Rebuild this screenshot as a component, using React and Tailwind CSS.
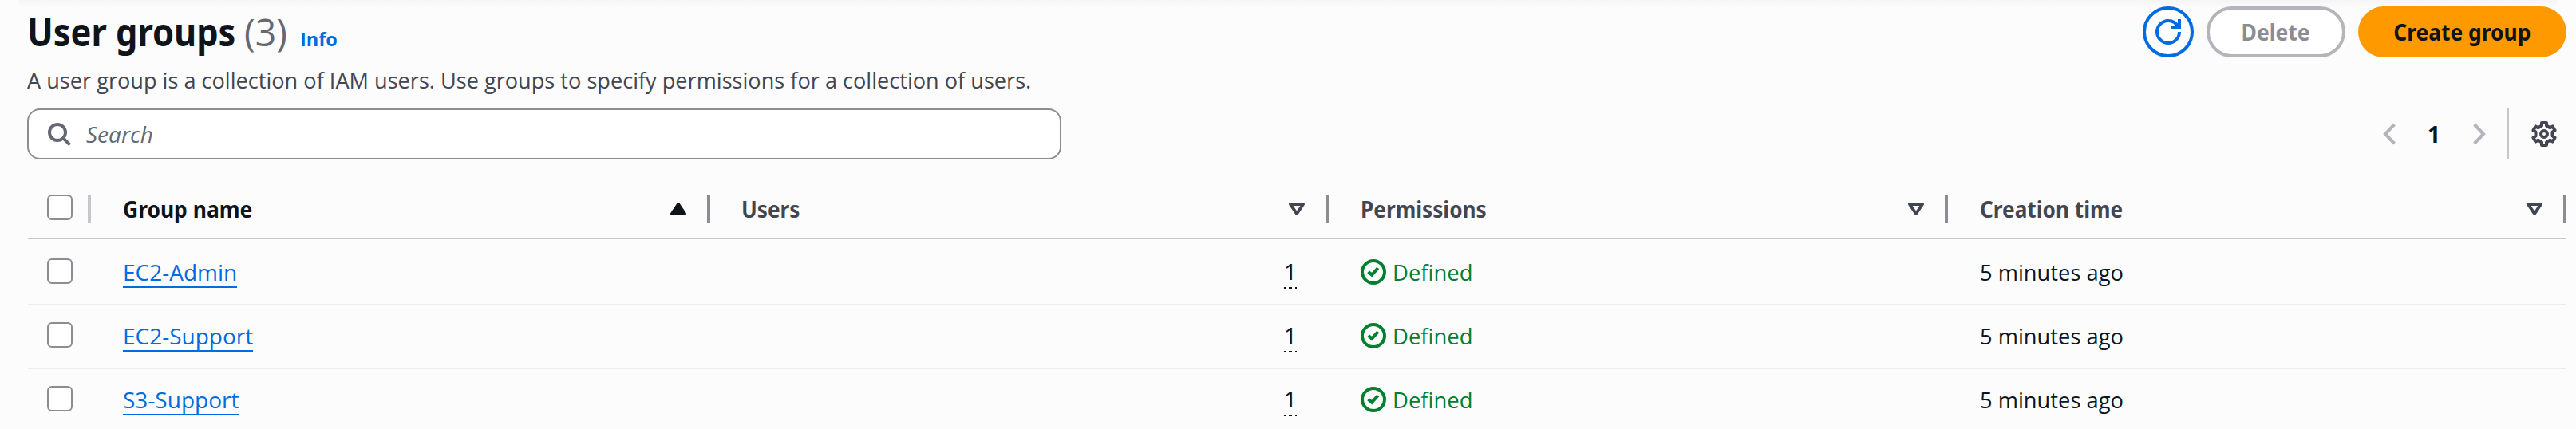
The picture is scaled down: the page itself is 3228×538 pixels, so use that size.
import React from "react";

const GRID = "grid grid-cols-[80px_776px_775px_776px_775px]";

const columns = [
  { label: "Group name", sorted: true, pad: "pl-10" },
  { label: "Users", pad: "pl-[39px]" },
  { label: "Permissions", pad: "pl-10" },
  { label: "Creation time", pad: "pl-10" },
];

const groups = [
  { name: "EC2-Admin", users: 1, permissions: "Defined", created: "5 minutes ago" },
  { name: "EC2-Support", users: 1, permissions: "Defined", created: "5 minutes ago" },
  { name: "S3-Support", users: 1, permissions: "Defined", created: "5 minutes ago" },
];

function Icon({ className = "", children }) {
  return (
    <svg
      viewBox="0 0 16 16"
      className={"size-8 shrink-0 overflow-visible " + className}
      fill="none"
      stroke="currentColor"
      strokeWidth="2"
    >
      {children}
    </svg>
  );
}

function Checkbox() {
  return <span className="block size-8 rounded-[6px] border-2 border-[#8c8c94] bg-white" />;
}

function SortIcon({ sorted }) {
  return sorted ? (
    <Icon className="text-[#0f141a]">
      <path d="M4 11h8L8 5z" fill="currentColor" strokeLinejoin="round" />
    </Icon>
  ) : (
    <Icon className="text-[#424650]">
      <path d="M4 5h8l-4 6z" strokeLinejoin="round" />
    </Icon>
  );
}

function Header() {
  return (
    <header className="flex justify-between">
      <div className="pt-2.5">
        <div className="flex h-[60px] items-baseline leading-[60px] whitespace-nowrap">
          <h1 className="w-[272px] font-['Noto_Sans',sans-serif] text-[48px] font-bold text-[#0f141a]">
            <span className="inline-block origin-left scale-x-[0.903]">User groups</span>
          </h1>
          <span className="w-[70px] text-[48px] text-[#656871]">
            <span className="inline-block origin-left scale-x-[0.965]">(3)</span>
          </span>
          <a className="origin-left scale-x-[0.98] text-[24px] font-bold text-[#006ce0]">Info</a>
        </div>
        <p className="mt-2.5 h-10 origin-left scale-x-[0.969] leading-10 whitespace-nowrap text-[#424650]">
          A user group is a collection of IAM users. Use groups to specify permissions for a collection of users.
        </p>
      </div>
      <div className="flex gap-4 pt-2 font-['Noto_Sans',sans-serif] font-bold">
        <button className="flex size-16 items-center justify-center rounded-full border-4 border-[#006ce0] bg-white text-[#006ce0]">
          <Icon>
            <path d="M15 8c0 3.87-3.13 7-7 7s-7-3.13-7-7 3.13-7 7-7c2.79 0 5.2 1.63 6.33 4" />
            <path d="M10 5h5V0" />
          </Icon>
        </button>
        <button className="flex h-16 w-[174px] items-center justify-center rounded-full border-4 border-[#b4b4bb] bg-white text-[#8c8c94]">
          <span className="scale-x-[0.943]">Delete</span>
        </button>
        <button className="flex h-16 w-[261px] items-center justify-center rounded-full bg-[#ff9900] text-[#0f141a]">
          <span className="scale-x-[0.942]">Create group</span>
        </button>
      </div>
    </header>
  );
}

function Toolbar() {
  return (
    <div className="mt-4 flex h-16 justify-between">
      <div className="flex w-[1296px] items-center gap-[18px] rounded-2xl border-2 border-[#8c8c94] bg-white pl-[22px] text-[#656871]">
        <Icon>
          <circle cx="7" cy="7" r="5" />
          <path d="M10.4 10.4 14.8 14.8" />
        </Icon>
        <span className="italic">Search</span>
      </div>
      <div className="flex items-center">
        <Icon className="text-[#b4b4bb]">
          <path d="M10.7 2 5 8l5.7 6" />
        </Icon>
        <span className="mr-[30px] ml-[29px] w-5 text-center font-bold text-[#0f141a]">1</span>
        <Icon className="text-[#b4b4bb]">
          <path d="M5.3 2 11 8l-5.7 6" />
        </Icon>
        <span className="ml-5 h-16 w-0.5 bg-[#c6c6cd]" />
        <Icon className="mr-3 ml-7 text-[#424650]">
          <path
            d="M6.5 2.8V1h3v1.8l2.25 1.3 1.56-.9 1.5 2.6-1.56.9v2.6l1.56.9-1.5 2.6-1.56-.9-2.25 1.3V15h-3v-1.8l-2.25-1.3-1.56.9-1.5-2.6 1.56-.9V6.7l-1.56-.9 1.5-2.6 1.56.9z"
            strokeLinejoin="round"
          />
          <circle cx="8" cy="8" r="2" />
        </Icon>
      </div>
    </div>
  );
}

function TableHead() {
  return (
    <div className={GRID + " h-[100px] pt-11 font-['Noto_Sans',sans-serif] font-bold"}>
      <div className="flex h-9 justify-between pl-[25px]">
        <Checkbox />
        <span className="w-1 bg-[#c6c6cd]" />
      </div>
      {columns.map((column) => (
        <div key={column.label} className={"flex h-9 items-center " + column.pad}>
          <span
            className={
              "grow origin-left leading-9 " +
              (column.sorted ? "scale-x-[0.944] text-[#0f141a]" : "scale-x-[0.936] text-[#424650]")
            }
          >
            {column.label}
          </span>
          <SortIcon sorted={column.sorted} />
          <span className="ml-5 h-9 w-1 bg-[#8c8c94]" />
        </div>
      ))}
      <div className="col-span-5 mt-[18px] ml-px h-0.5 bg-[#c6c6cd]" />
    </div>
  );
}

function TableRow({ group }) {
  return (
    <div className={GRID + " h-20 pt-[19px] leading-10"}>
      <div className="pt-[3px] pl-[25px]">
        <Checkbox />
      </div>
      <div className="pl-10">
        <a className="inline-block h-10 border-b-2 border-[#006ce0] text-[#006ce0]">{group.name}</a>
      </div>
      <div className="flex justify-end pr-10">
        <div className="flex w-4 flex-col text-[#0f141a]">
          <span className="h-[39px] leading-[38px]">{group.users}</span>
          <span className="flex h-0.5 justify-between">
            <i className="w-0.5 bg-[#0f141a]" />
            <i className="w-1 bg-[#0f141a]" />
            <i className="w-0.5 bg-[#0f141a]" />
          </span>
        </div>
      </div>
      <div className="flex gap-2 pl-10 text-[#00802f]">
        <Icon className="mt-1">
          <circle cx="8" cy="8" r="7" />
          <path d="m4.8 7.9 2.2 1.9 3.9-4.3" />
        </Icon>
        <span className="h-10 origin-left scale-x-[0.98]">{group.permissions}</span>
      </div>
      <div className="pl-10 text-[#0f141a]">
        <span className="inline-block origin-left scale-x-[0.975]">{group.created}</span>
      </div>
      <div className="col-span-5 mt-[19px] ml-px h-0.5 bg-[#ebebf0]" />
    </div>
  );
}

export default function App() {
  return (
    <div className="relative h-[538px] w-[3228px] overflow-hidden bg-[#fcfcfd] pr-3 pl-[34px] font-['Open_Sans','Noto_Sans',sans-serif] text-[28px]">
      <div className="absolute top-0 right-6 left-6 h-2.5 bg-linear-to-b from-[#f5f5f6] to-[#fcfcfd]" />
      <div className="relative">
        <Header />
        <Toolbar />
        <TableHead />
        <div className="pt-0.5">
          {groups.map((group) => (
            <TableRow key={group.name} group={group} />
          ))}
        </div>
      </div>
    </div>
  );
}
